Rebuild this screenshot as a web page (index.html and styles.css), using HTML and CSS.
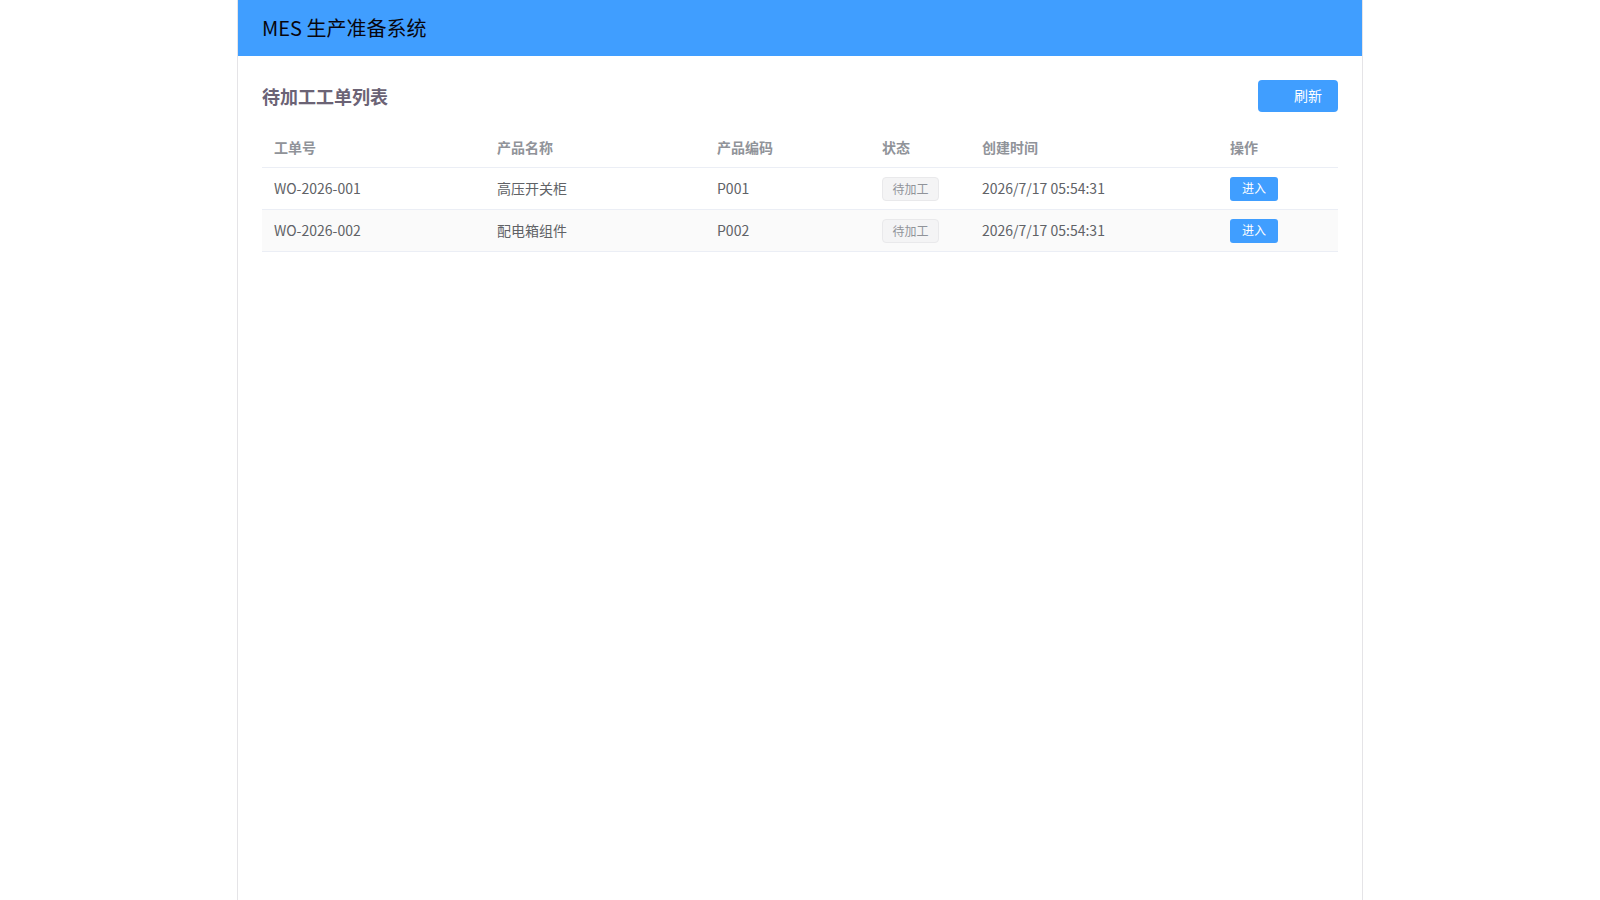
FILE: index.html
```html
<!DOCTYPE html>
<html lang="zh-CN">
<head>
<meta charset="UTF-8">
<meta name="viewport" content="width=device-width, initial-scale=1">
<title>MES 生产准备系统</title>
<link rel="stylesheet" href="styles.css">
</head>
<body>
<div class="app">
  <header class="app-header">MES 生产准备系统</header>
  <main class="app-main">
    <div class="toolbar">
      <h2 class="toolbar-title">待加工工单列表</h2>
      <button class="btn btn-refresh" type="button"><span class="btn-icon" aria-hidden="true"></span>刷新</button>
    </div>
    <table class="orders">
      <colgroup>
        <col class="col-number"><col class="col-name"><col class="col-code"><col class="col-status"><col class="col-time"><col class="col-action">
      </colgroup>
      <thead>
        <tr><th scope="col">工单号</th><th scope="col">产品名称</th><th scope="col">产品编码</th><th scope="col">状态</th><th scope="col">创建时间</th><th scope="col">操作</th></tr>
      </thead>
      <tbody>
        <tr><td>WO-2026-001</td><td>高压开关柜</td><td>P001</td><td><span class="tag">待加工</span></td><td>2026/7/17 05:54:31</td><td><button class="btn btn-small" type="button">进入</button></td></tr>
        <tr><td>WO-2026-002</td><td>配电箱组件</td><td>P002</td><td><span class="tag">待加工</span></td><td>2026/7/17 05:54:31</td><td><button class="btn btn-small" type="button">进入</button></td></tr>
      </tbody>
    </table>
  </main>
</div>
</body>
</html>
```
FILE: styles.css
```css
*, *::before, *::after { box-sizing: border-box; }

body {
  margin: 0;
  background: #fff;
  color: #606266;
  font-family: "Noto Sans CJK SC", sans-serif;
  font-size: 14px;
}

.app {
  max-width: 1126px;
  min-height: 100vh;
  margin: 0 auto;
  border: solid #e5e4e7;
  border-width: 0 1px;
}

.app-header {
  display: flex;
  align-items: center;
  height: 56px;
  padding: 0 24px;
  background: #409eff;
  color: #08060d;
  font-size: 20px;
  line-height: 28px;
}

.app-main { padding: 24px; }

.toolbar {
  display: flex;
  align-items: center;
  justify-content: space-between;
  margin-bottom: 16px;
}

.toolbar-title {
  margin: 0;
  color: #6b6375;
  font-size: 18px;
  font-weight: 700;
  line-height: 32px;
}

.btn {
  display: inline-flex;
  align-items: center;
  justify-content: center;
  border: 0;
  border-radius: 4px;
  background: #409eff;
  color: #fff;
  font-family: inherit;
  font-weight: 400;
  line-height: 1;
  cursor: pointer;
}

.btn-refresh {
  height: 32px;
  padding: 0 16px 2px;
  font-size: 14px;
}

.btn-icon {
  width: 14px;
  height: 14px;
  margin-right: 6px;
}

.btn-small {
  height: 24px;
  padding: 0 12px 2px;
  border-radius: 3px;
  font-size: 12px;
}

.orders {
  width: 100%;
  table-layout: fixed;
  border-collapse: separate;
  border-spacing: 0;
}

.col-number { width: 223px; }
.col-name { width: 220px; }
.col-code { width: 165px; }
.col-status { width: 100px; }
.col-time { width: 248px; }
.col-action { width: 120px; }

.orders th,
.orders td {
  padding: 8px 12px;
  border-bottom: 1px solid #ebeef5;
  line-height: 23px;
  text-align: left;
  vertical-align: middle;
}

.orders th {
  color: #909399;
  font-weight: 700;
}

.orders td { height: 42px; }

.orders tbody tr:nth-child(even) { background: #fafafa; }

.orders .tag,
.orders .btn-small { vertical-align: middle; }

.tag {
  display: inline-flex;
  align-items: center;
  justify-content: center;
  min-width: 57px;
  height: 24px;
  padding: 0 9px;
  border: 1px solid #e9e9eb;
  border-radius: 4px;
  background: #f4f4f5;
  color: #909399;
  font-size: 12px;
  line-height: 1;
}
```
